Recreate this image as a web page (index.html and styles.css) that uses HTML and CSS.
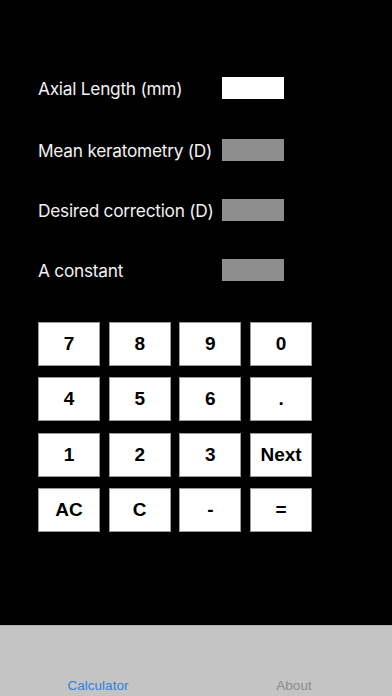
FILE: index.html
```html
<!DOCTYPE html>
<html>
<head>
<meta charset="utf-8">
<link rel="stylesheet" href="styles.css">
</head>
<body>
<div class="screen">
  <main class="content">
    <div class="fields">
      <div class="field"><span class="label">Axial Length (mm)</span><span class="input active"></span></div>
      <div class="field second"><span class="label">Mean keratometry (D)</span><span class="input"></span></div>
      <div class="field"><span class="label">Desired correction (D)</span><span class="input"></span></div>
      <div class="field"><span class="label">A constant</span><span class="input"></span></div>
    </div>
    <div class="keypad">
      <button class="key">7</button><button class="key">8</button><button class="key">9</button><button class="key">0</button>
      <button class="key">4</button><button class="key">5</button><button class="key">6</button><button class="key">.</button>
      <button class="key">1</button><button class="key">2</button><button class="key">3</button><button class="key">Next</button>
      <button class="key">AC</button><button class="key">C</button><button class="key">-</button><button class="key">=</button>
    </div>
  </main>
  <nav class="tabbar">
    <span class="tab selected">Calculator</span>
    <span class="tab">About</span>
  </nav>
</div>
</body>
</html>
```
FILE: styles.css
```css
* { box-sizing: border-box; }
html, body { margin: 0; padding: 0; background: #000; }
.screen {
  width: 392px;
  height: 696px;
  display: flex;
  flex-direction: column;
  background: #000;
}
.content {
  flex: 1;
  padding: 77px 0 0 38px;
}
.fields {
  display: flex;
  flex-direction: column;
  gap: 38px;
}
.field {
  display: flex;
  align-items: center;
  height: 22px;
}
.field.second { margin-top: 2px; }
.label {
  width: 184px;
  color: #f2f2f2;
  font-family: Inter, "Liberation Sans", sans-serif;
  font-size: 17.3px;
  letter-spacing: -0.25px;
}
.input {
  width: 62px;
  height: 22px;
  background: #8e8e8e;
}
.input.active { background: #fff; }
.keypad {
  margin-top: 41px;
  display: grid;
  grid-template-columns: repeat(4, 62px);
  grid-auto-rows: 44px;
  column-gap: 8.7px;
  row-gap: 11.3px;
}
.key {
  margin: 0;
  padding: 0;
  border: 1px solid #9a9a9a;
  background: #fff;
  color: #000;
  font-family: "Liberation Sans", Arial, sans-serif;
  font-weight: bold;
  font-size: 19px;
}
.tabbar {
  height: 71px;
  background: #c4c4c4;
  border-top: 1px solid #b0b0b0;
  display: flex;
  align-items: flex-end;
  padding-bottom: 1px;
}
.tab {
  flex: 1;
  text-align: center;
  font-family: "Liberation Sans", Arial, sans-serif;
  font-size: 13.5px;
  color: #8c8c8c;
  line-height: 18px;
}
.tab.selected { color: #2f80dc; }
```
